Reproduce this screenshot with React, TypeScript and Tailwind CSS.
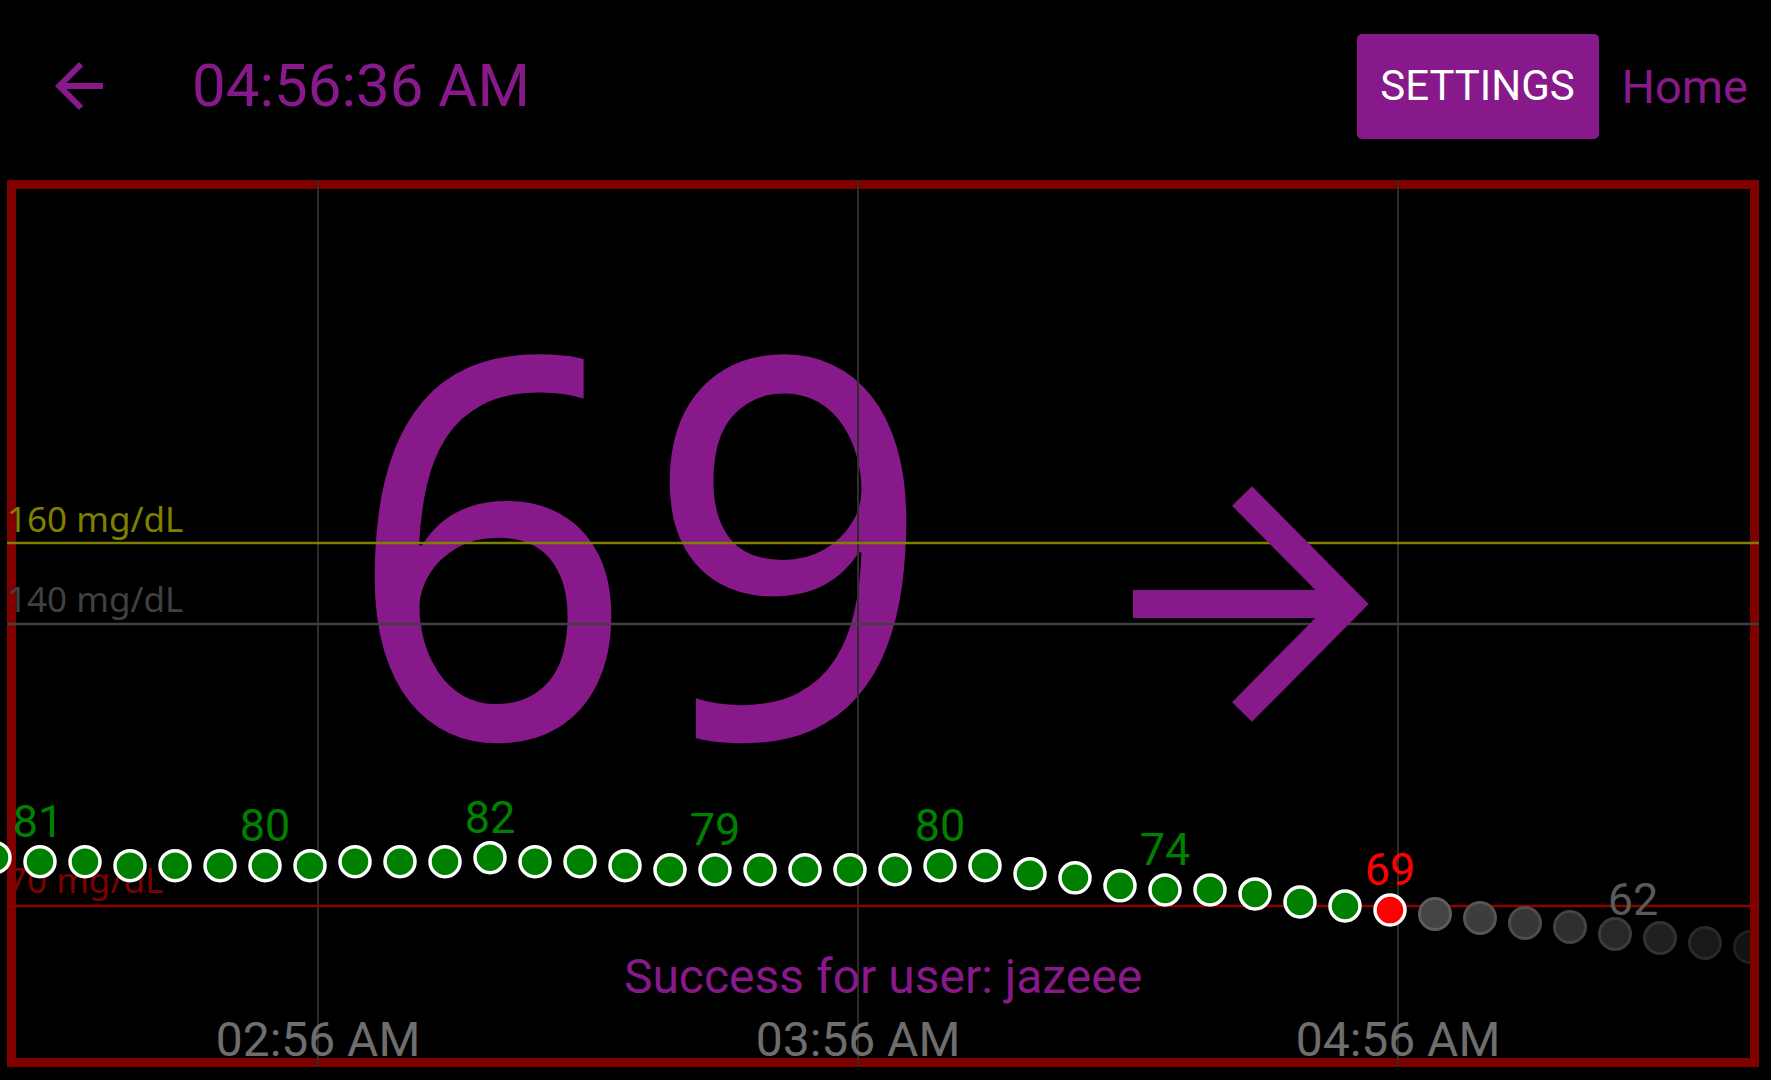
const readings = [82, 81, 81, 80, 80, 80, 80, 80, 81, 81, 81, 82, 81, 81, 80, 79, 79, 79, 79, 79, 79, 80, 80, 78, 77, 75, 74, 74, 73, 71, 70, 69];

// first reading sits just left of the chart, 5 minutes = 45px
const xOf = (i: number) => -5 + 45 * i;
const yOf = (v: number) => 906 - (v - 70) * 4.03;

const predicted = [
  { y: 914, fill: "#444444", ring: "#5c5c5c" },
  { y: 918, fill: "#3d3d3d", ring: "#555555" },
  { y: 923, fill: "#363636", ring: "#4c4c4c" },
  { y: 927, fill: "#2f2f2f", ring: "#434343" },
  { y: 934, fill: "#282828", ring: "#3b3b3b" },
  { y: 938, fill: "#202020", ring: "#323232" },
  { y: 943, fill: "#191919", ring: "#292929" },
  { y: 947, fill: "#121212", ring: "#1f1f1f" },
];

const labels = [
  { i: 1, text: "81", x: 38 },
  { i: 6, text: "80" },
  { i: 11, text: "82" },
  { i: 16, text: "79" },
  { i: 21, text: "80" },
  { i: 26, text: "74" },
];

function Chart() {
  const last = readings.length - 1;
  return (
    <svg className="absolute inset-[-9px] overflow-visible" width={1752} height={887} viewBox="7 180 1752 887">
      <defs>
        <clipPath id="inner">
          <rect x={0} y={180} width={1750} height={880} />
        </clipPath>
      </defs>

      {/* hour grid */}
      {[318, 858, 1398].map((x) => (
        <line key={x} x1={x} x2={x} y1={180} y2={1067} stroke="#2c2c2c" strokeWidth={2} />
      ))}

      {/* thresholds */}
      <line x1={7} x2={1759} y1={543} y2={543} stroke="#808000" strokeWidth={2.5} />
      <line x1={7} x2={1759} y1={624} y2={624} stroke="#404040" strokeWidth={2.5} />
      <line x1={7} x2={1759} y1={906} y2={906} stroke="#8f0000" strokeWidth={2.5} />
      <g fontFamily="'Noto Sans', sans-serif" fontSize={35}>
        <text x={7} y={532} fill="#808000">160 mg/dL</text>
        <text x={7} y={612} fill="#404040">140 mg/dL</text>
        <text x={7} y={893} fill="#800000">70 mg/dL</text>
      </g>

      {/* trend arrow */}
      <path d="M1133 604H1345" stroke="#87198a" strokeWidth={28} fill="none" />
      <path d="M1242 496L1349 604L1242 712" stroke="#87198a" strokeWidth={28} fill="none" strokeLinejoin="miter" />

      {/* readings */}
      {readings.map((v, i) => (
        <circle
          key={i}
          cx={xOf(i)}
          cy={yOf(v)}
          r={15}
          fill={i === last ? "#ff0000" : "#008000"}
          stroke="#ffffff"
          strokeWidth={3.5}
        />
      ))}
      <g clipPath="url(#inner)">
        {predicted.map((p, k) => (
          <circle key={k} cx={1435 + 45 * k} cy={p.y} r={15.5} fill={p.fill} stroke={p.ring} strokeWidth={3} />
        ))}
      </g>

      <g fontFamily="Roboto, sans-serif" fontSize={45} textAnchor="middle">
        {labels.map((l) => (
          <text key={l.i} x={l.x ?? xOf(l.i)} y={yOf(readings[l.i]) - 25} fill="#008000">
            {l.text}
          </text>
        ))}
        <text x={1390} y={885} fill="#ff0000">69</text>
        <text x={1633} y={915} fill="#5a5a5a">62</text>
      </g>

      <text x={883} y={993} fontFamily="Roboto, sans-serif" fontSize={48} fill="#87198a" textAnchor="middle">
        Success for user: jazeee
      </text>
      <g fontFamily="Roboto, sans-serif" fontSize={48} fill="#6e6e6e" textAnchor="middle">
        <text x={318} y={1056}>02:56 AM</text>
        <text x={858} y={1056}>03:56 AM</text>
        <text x={1398} y={1056}>04:56 AM</text>
      </g>
    </svg>
  );
}

export default function App() {
  return (
    <div className="w-[1771px] h-[1080px] bg-black overflow-hidden font-['Roboto',sans-serif]">
      {/* Top bar */}
      <div className="flex items-center h-[172px] pl-[43px] pr-[23px]">
        <svg width="72" height="72" viewBox="0 0 24 24" fill="#87198a">
          <path d="M20 11H7.83l5.59-5.59L12 4l-8 8 8 8 1.41-1.41L7.83 13H20v-2z" />
        </svg>
        <div className="ml-[77px] text-[60px] leading-none text-[#87198a]">04:56:36 AM</div>
        <button className="ml-auto w-[242px] h-[105px] rounded-[5px] bg-[#87198a] text-white text-[42px] leading-none">
          SETTINGS
        </button>
        <div className="ml-[23px] text-[47px] leading-none text-[#87198a]">Home</div>
      </div>

      {/* Glucose panel */}
      <div className="relative mt-[8px] ml-[7px] w-[1752px] h-[887px] border-[9px] border-[#800000]">
        <div className="absolute left-[331px] top-[78px] origin-left scale-x-[0.95] tracking-[10px] font-['Noto_Sans',sans-serif] text-[530px] leading-none text-[#87198a]">
          69
        </div>
        <Chart />
      </div>
    </div>
  );
}
